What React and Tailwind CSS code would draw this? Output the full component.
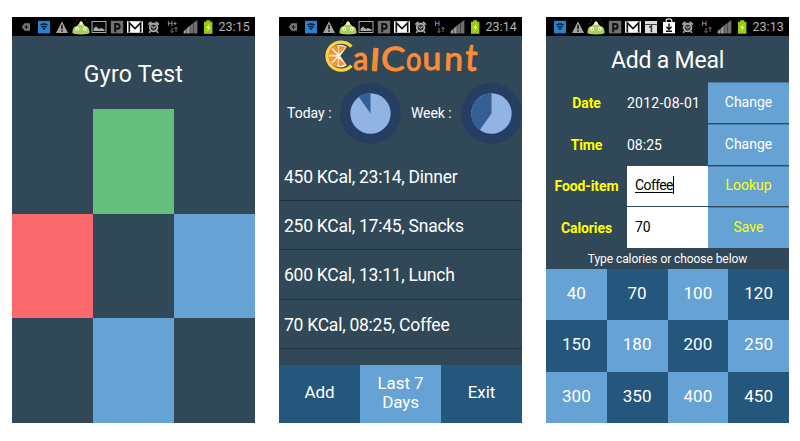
import React from "react";

const ICONS = {
  back: (
    <svg width="18" height="14" viewBox="0 0 18 14">
      <path d="M4.8 7 7.5 3.2H13v7.6H7.5Z" fill="#777" />
      <path d="M7.4 7h4M9.4 5v4" stroke="#111" strokeWidth="1" />
    </svg>
  ),
  wifi: (
    <svg width="18" height="14" viewBox="0 0 18 14">
      <rect x="3" y="0.8" width="12" height="12.6" fill="#2681cf" />
      <path d="M5.5 5.2q3.5-2.4 7 0M6.6 7.2q2.4-1.6 4.8 0M7.8 9.2q1.2-.8 2.4 0" stroke="#0a1c33" strokeWidth="1.5" fill="none" />
    </svg>
  ),
  warn: (
    <svg width="18" height="14" viewBox="0 0 18 14">
      <path d="M9 1.2 15 13H3Z" fill="#a2a2a2" />
      <path d="M9 4.8v4.4M9 10.2v1.6" stroke="#111" strokeWidth="1.5" />
    </svg>
  ),
  monster: (
    <svg width="18" height="16" viewBox="0 -1 18 16">
      <path d="M4 .4h1M12.5-.2h1M2.4 3h1M14.5 2.6h1" stroke="#8a5c12" />
      <path d="M.3 12.8Q.8 6 4.8 6 5.6 3.8 9 3.8T13.2 6q4 0 4.5 6.8-1.2 1.7-8.7 1.7T.3 12.8Z" fill="#a9cf5c" />
      <path d="M7 4.8q.2-3.6 2-3.6t2.3 3.6Z" fill="#fff5bb" />
      <circle cx="5.2" cy="8.8" r="2" fill="#f4fbdc" />
      <circle cx="12.8" cy="8.8" r="2" fill="#f4fbdc" />
      <path d="M4.8 9h1M12.2 9h1" stroke="#53762b" fill="none" />
    </svg>
  ),
  photo: (
    <svg width="18" height="14" viewBox="0 0 18 14">
      <rect x="2" y="1.5" width="14" height="11" fill="#090909" stroke="#aaa" />
      <path d="M3.5 11V8.7l2.4-2.2L9 9l2-1 3.5 1.5V11Z" fill="#aaa" />
    </svg>
  ),
  p: (
    <svg width="18" height="14" viewBox="0 0 18 14">
      <rect x="2.8" y="0.8" width="12.4" height="12.6" fill="#717171" />
      <path d="M7.2 12.2V4h2a2.4 2.4 0 0 1 0 4.8H8.2" fill="none" stroke="#111" strokeWidth="2" />
    </svg>
  ),
  mail: (
    <svg width="18" height="14" viewBox="0 0 18 14">
      <rect x="1" y="1.2" width="16" height="11.6" fill="#fff" />
      <path d="M3.3 12.5V2.8L9 8.5l5.7-5.7v9.7" fill="none" stroke="#151515" strokeWidth="1.7" />
    </svg>
  ),
  calendar: (
    <svg width="18" height="14" viewBox="0 0 18 14">
      <rect x="3" y="1" width="12" height="3" fill="#ddd" />
      <rect x="3" y="4.7" width="12" height="8.5" fill="#ddd" />
      <path d="M7.2 7.2 9.4 6v6.2" fill="none" stroke="#333" strokeWidth="1.6" />
    </svg>
  ),
  bag: (
    <svg width="18" height="17" viewBox="0 -2 18 17">
      <path d="M6.2 2.6V.8Q6.2-1.2 9-1.2t2.8 2v1.8" fill="none" stroke="#eee" strokeWidth="1.2" />
      <path d="M3 2h12v11.3H3Z" fill="#fff" />
      <path d="M9 3.5V9M6.4 6.8 9 9.4l2.6-2.6M6 11.3h6" fill="none" stroke="#111" strokeWidth="1.4" />
    </svg>
  ),
  alarm: (
    <svg width="18" height="14" viewBox="0 0 18 14">
      <circle cx="9.6" cy="7.6" r="3.9" fill="#3a3a3a" stroke="#b0b0b0" strokeWidth="1.7" />
      <path d="M4.4 4.6 7.4 1.8M14.8 4.6 11.8 1.8M6.4 11.3 5.2 12.8M12.8 11.3l1.2 1.5" stroke="#b0b0b0" strokeWidth="1.8" />
      <path d="M7.6 6.2 9.6 8.2l2.2-1.8" fill="none" stroke="#ccc" />
    </svg>
  ),
  signal: (
    <svg width="18" height="14" viewBox="0 0 18 14">
      <path d="M2.6 13.4v-2.2L9 5.4v8Z" fill="#9a9a9a" />
      <path d="M9 13.4v-8L16.4 0v13.4Z" fill="#707070" />
      <path d="M5.6 14V7M8.9 14V4M12.4 14V1" stroke="#000" strokeWidth="0.4" />
    </svg>
  ),
  battery: (
    <svg width="18" height="14" viewBox="0 0 18 14">
      <path d="M5 1.8h2.2V.2h4v1.6h2.2v12H5Z" fill="#99cc09" />
      <path d="M10.5 3.8 7.3 8h2l-1.2 3.5L11.4 7H9.3Z" fill="#fff" />
    </svg>
  ),
};

function Network({ plus }) {
  return (
    <svg width="18" height="14" viewBox="0 0 18 14">
      <text x="4.4" y="6.2" fontFamily="Roboto, sans-serif" fontSize="7.6" fill="#bbb">
        {plus ? "H+" : "H"}
      </text>
      <path d="M9 7.8v4.8M7.4 11 9 12.6l1.6-1.6M13 12V7.2M11.4 8.9 13 7.2l1.6 1.7" fill="none" stroke="#777" />
    </svg>
  );
}

function StatusBar({ icons, time, plus }) {
  return (
    <div className="flex h-[19px] shrink-0 items-center bg-black pl-[5px]">
      {icons.map((name) => (
        <span key={name} className="flex w-[18.2px] shrink-0 justify-center">{ICONS[name]}</span>
      ))}
      <span className="flex w-[18.2px] shrink-0 justify-center">{ICONS.alarm}</span>
      <span className="flex w-[18.2px] shrink-0 justify-center"><Network plus={plus} /></span>
      <span className="flex w-[18.2px] shrink-0 justify-center">{ICONS.signal}</span>
      <span className="flex w-[18.2px] shrink-0 justify-center">{ICONS.battery}</span>
      <span className="ml-[1.5px] text-[12.5px] leading-[20px] text-[#b5b5b5]">{time}</span>
    </div>
  );
}

function Phone({ children, ...bar }) {
  return (
    <section className="flex h-[406px] w-[243px] flex-col overflow-hidden bg-[#314858] text-white">
      <StatusBar {...bar} />
      {children}
    </section>
  );
}

const DEFAULT_ICONS = ["back", "wifi", "warn", "monster", "photo", "p", "mail"];
const MEAL_ICONS = ["wifi", "warn", "monster", "p", "mail", "calendar", "bag"];

function GyroScreen() {
  return (
    <Phone icons={DEFAULT_ICONS} time="23:15" plus>
      <h1 className="h-[73px] pt-[23px] text-center text-[23px] leading-[31px] tracking-[0.3px]">Gyro Test</h1>
      <div className="grid flex-1 grid-cols-3 grid-rows-3">
        <div />
        <div className="bg-[#64bf7d]" />
        <div />
        <div className="bg-[#fa696d]" />
        <div />
        <div className="bg-[#66a2d3]" />
        <div />
        <div className="bg-[#66a2d3]" />
        <div />
      </div>
    </Phone>
  );
}

const LOGO_LETTERS = [
  { ch: "a", x: 74, sx: 1.12, sy: 1.2, r: 0 },
  { ch: "l", x: 91.5, sx: 1.1, sy: 1.0, r: 4 },
  { ch: "C", x: 101.5, sx: 1.3, sy: 1.2, r: 3 },
  { ch: "o", x: 126.5, sx: 0.98, sy: 1.2, r: 4 },
  { ch: "u", x: 143.5, sx: 1.22, sy: 1.2, r: 0 },
  { ch: "n", x: 165, sx: 1.22, sy: 1.2, r: 2 },
  { ch: "t", x: 185.5, sx: 1.2, sy: 1.36, r: 4 },
];

function Logo() {
  return (
    <svg width="243" height="42" viewBox="0 0 243 42" className="overflow-visible" role="img" aria-label="CalCount">
      <path d="M72.4 10.6A14 14 0 1 0 72.4 29.6" fill="none" stroke="#f9d43a" strokeWidth="3.4" />
      <g transform="translate(-2.2 0)">
        <path d="M70 11A11.3 11.3 0 1 0 70 29.2L63.5 20Z" fill="#fff0ce" />
        <g fill="#fb9035" stroke="#ef7922" strokeWidth="0.4">
          <path d="M62.5 17.4 62.6 9.9q3.2 0 6 1.6Z" />
          <path d="M61 17.2 61 9.8q-3 .3-5 2Z" />
          <path d="M59.6 18.6 54.4 13.2q-2 2.2-2.3 5.3Z" />
          <path d="M59.6 21 52 20.7q.3 3.2 2.2 5.6Z" />
          <path d="M60.6 22.6 55.6 27.8q2.1 1.9 5 2.2Z" />
          <path d="M62.3 22.8 62.3 30q3.3-.2 5.9-1.9Z" />
        </g>
      </g>
      {LOGO_LETTERS.map(({ ch, x, sx, sy, r }, i) => (
        <text
          key={i}
          transform={`translate(${x} 34) rotate(${r}) scale(${sx} ${sy})`}
          fontFamily="Lato, sans-serif"
          fontSize={ch === "l" ? 29 : 27.5}
          fill="#fc8b34"
          stroke="#fc8b34"
          strokeWidth={ch === "l" ? 2 : 0.9}
          strokeLinejoin="round"
        >
          {ch}
        </text>
      ))}
    </svg>
  );
}

function Pie({ slice }) {
  return (
    <svg width="61" height="61" viewBox="0 0 61 61" className="shrink-0">
      <circle cx="30.5" cy="30.5" r="30.4" fill="#253e61" />
      <circle cx="30.5" cy="30.5" r="20.2" fill="#91b4e4" />
      <path d={slice} fill="#355f94" />
    </svg>
  );
}

const MEALS = ["450 KCal, 23:14, Dinner", "250 KCal, 17:45, Snacks", "600 KCal, 13:11, Lunch", "70 KCal, 08:25, Coffee"];

function CountScreen() {
  return (
    <Phone icons={DEFAULT_ICONS} time="23:14">
      <div className="h-[42px] shrink-0"><Logo /></div>
      <div className="flex h-[74px] shrink-0 items-start pt-[5px] text-[14px] leading-[61px]">
        <span className="w-[61px] shrink-0 whitespace-nowrap pl-[8px]">Today :</span>
        <Pie slice="M30.5 30.5V10.3A20.2 20.2 0 0 0 18.8 14Z" />
        <span className="w-[60px] shrink-0 whitespace-nowrap pl-[10px] tracking-[-0.1px]">Week :</span>
        <Pie slice="M30.5 30.5V10.3A20.2 20.2 0 0 0 18.8 47Z" />
      </div>
      <ul className="flex flex-1 flex-col">
        {MEALS.map((meal) => (
          <li key={meal} className="h-[49.2px] shrink-0 border-b border-[#25313c] pl-[5px] pt-px text-[17.5px] leading-[48px] tracking-[-0.25px]">
            {meal}
          </li>
        ))}
      </ul>
      <div className="grid h-[58px] shrink-0 grid-cols-3 text-center text-[17px] leading-[19px] tracking-[-0.1px]">
        <button className="bg-[#25577d] pb-[3px]">Add</button>
        <button className="bg-[#66a2d3] pb-[2px]">Last 7<br />Days</button>
        <button className="bg-[#25577d] pb-[3px]">Exit</button>
      </div>
    </Phone>
  );
}

const ACTION = "border-t border-[#4c7ca5] bg-[#66a2d3] pb-px text-center";
const LABEL = "flex items-center justify-center pt-[2px] text-[14px] font-bold tracking-[-0.1px] text-[#ffff00]";

const AMOUNTS = [40, 70, 100, 120, 150, 180, 200, 250, 300, 350, 400, 450];
const LIGHT = [40, 100, 180, 250, 300, 400];

function MealScreen() {
  return (
    <Phone icons={MEAL_ICONS} time="23:13">
      <h1 className="h-[46px] shrink-0 pt-[9px] text-center text-[23px] leading-[31px] tracking-[-0.2px]">Add a Meal</h1>
      <div className="grid h-[166px] shrink-0 grid-cols-3 grid-rows-4 gap-y-px text-[14px]">
        <div className={LABEL}>Date</div>
        <div className="flex items-center whitespace-nowrap pt-[2px] tracking-[0.25px]">2012-08-01</div>
        <button className={ACTION}>Change</button>
        <div className={LABEL}>Time</div>
        <div className="flex items-center pt-[2px]">08:25</div>
        <button className={ACTION}>Change</button>
        <div className={LABEL}>Food-item</div>
        <div className="flex items-center bg-white pb-[2px] pl-[8px] text-black">
          <span className="border-r border-black leading-[18px] tracking-[-0.6px] underline underline-offset-2">Coffee</span>
        </div>
        <button className={`${ACTION} text-[#ffff00]`}>Lookup</button>
        <div className={LABEL}>Calories</div>
        <div className="flex items-center bg-white pb-px pl-[8px] text-black">70</div>
        <button className={`${ACTION} text-[#ffff00]`}>Save</button>
      </div>
      <p className="h-[21px] shrink-0 pt-px text-center text-[12px] leading-[20px] tracking-[-0.07px]">Type calories or choose below</p>
      <div className="grid flex-1 grid-cols-4 grid-rows-3 text-[17px]">
        {AMOUNTS.map((amount) => (
          <button key={amount} className={`pb-[2px] ${LIGHT.includes(amount) ? "bg-[#66a2d3]" : "bg-[#25577d]"}`}>
            {amount}
          </button>
        ))}
      </div>
    </Phone>
  );
}

export default function App() {
  return (
    <main className="flex h-[441px] w-[800px] gap-[24px] overflow-hidden bg-white pl-[12px] pt-[17px] font-['Roboto',sans-serif]">
      <GyroScreen />
      <CountScreen />
      <MealScreen />
    </main>
  );
}
